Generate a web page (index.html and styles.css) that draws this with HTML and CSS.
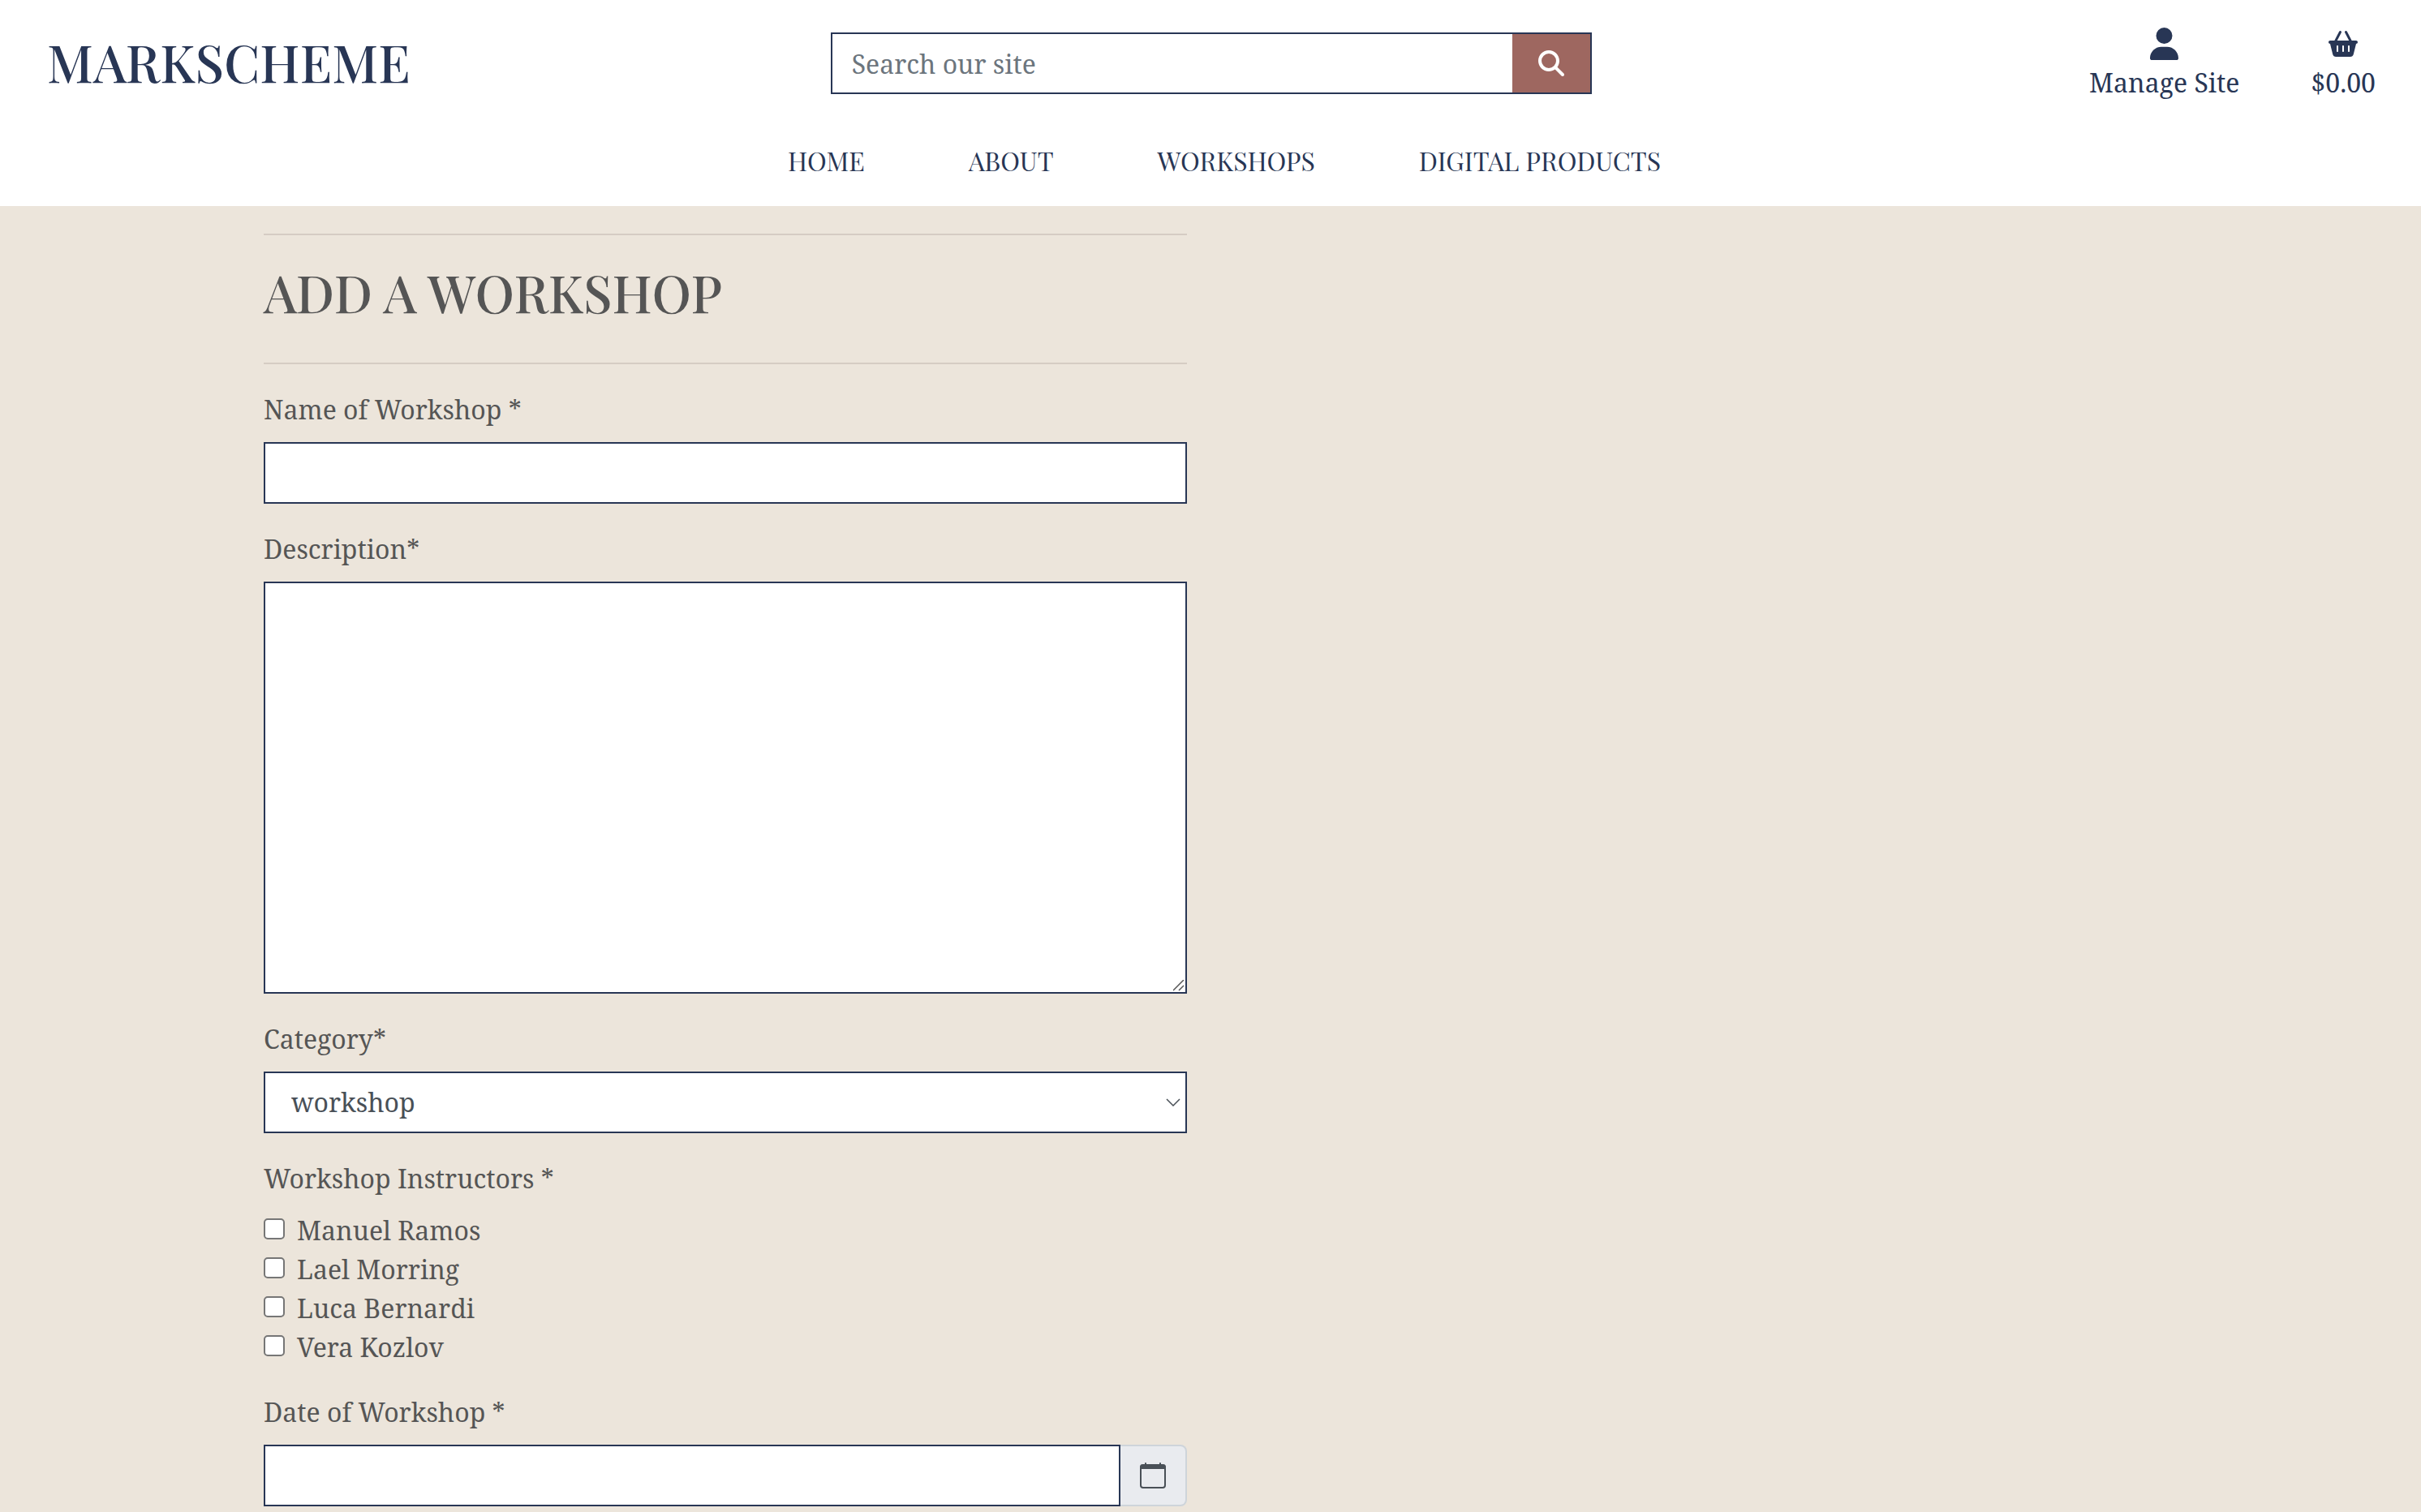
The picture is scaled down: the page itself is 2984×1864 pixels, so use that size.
FILE: index.html
```html
<!DOCTYPE html>
<html lang="en">
<head>
  <meta charset="utf-8">
  <meta name="viewport" content="width=device-width, initial-scale=1">
  <title>Markscheme</title>
  <link rel="stylesheet" href="styles.css">
</head>
<body>
  <header class="site-header">
    <div class="topbar">
      <a class="logo" href="#">MARKSCHEME</a>
      <form class="search" role="search">
        <input class="search-input" type="text" placeholder="Search our site" aria-label="Search our site">
        <button class="search-button" type="submit" aria-label="Search">
          <svg width="32" height="32" viewBox="0 0 512 512" fill="currentColor" aria-hidden="true"><path d="M416 208c0 45.900-14.900 88.300-40 122.700L502.600 457.400c12.500 12.500 12.500 32.800 0 45.300s-32.800 12.500-45.300 0L330.700 376c-34.400 25.200-76.800 40-122.700 40C93.100 416 0 322.900 0 208S93.100 0 208 0S416 93.100 416 208zM208 352a144 144 0 1 0 0-288 144 144 0 1 0 0 288z"/></svg>
        </button>
      </form>
      <div class="account">
        <a class="account-link" href="#">
          <svg class="account-icon" width="35" height="40" viewBox="0 0 448 512" fill="currentColor" aria-hidden="true"><path d="M224 256A128 128 0 1 0 224 0a128 128 0 1 0 0 256zm-45.700 48C79.800 304 0 383.800 0 482.300C0 498.700 13.300 512 29.700 512l388.600 0c16.400 0 29.700-13.300 29.700-29.700C448 383.800 368.200 304 269.700 304l-91.400 0z"/></svg>
          <span>Manage Site</span>
        </a>
        <a class="account-link" href="#">
          <svg class="account-icon" width="36" height="40" viewBox="0 -64 576 640" fill="currentColor" aria-hidden="true"><path d="M253.300 35.100c6.100-11.800 1.500-26.300-10.200-32.400s-26.300-1.500-32.400 10.200L117.600 192 32 192c-17.700 0-32 14.300-32 32s14.300 32 32 32L83.900 463.500C91 492 116.600 512 146 512L430 512c29.400 0 55-20 62.100-48.500L544 256c17.700 0 32-14.300 32-32s-14.300-32-32-32l-85.600 0L365.300 12.900C359.200 1.200 344.700-3.400 332.900 2.700s-16.300 20.600-10.200 32.400L404.300 192l-232.600 0L253.300 35.100zM192 304l0 96c0 8.800-7.200 16-16 16s-16-7.200-16-16l0-96c0-8.800 7.200-16 16-16s16 7.200 16 16zm96-16c8.800 0 16 7.200 16 16l0 96c0 8.800-7.200 16-16 16s-16-7.200-16-16l0-96c0-8.800 7.200-16 16-16zm128 16l0 96c0 8.800-7.200 16-16 16s-16-7.200-16-16l0-96c0-8.800 7.200-16 16-16s16 7.200 16 16z"/></svg>
          <span>$0.00</span>
        </a>
      </div>
    </div>
    <nav class="main-nav" aria-label="Main">
      <a href="#">HOME</a>
      <a href="#">ABOUT</a>
      <a href="#">WORKSHOPS</a>
      <a href="#">DIGITAL PRODUCTS</a>
    </nav>
  </header>

  <main class="content">
    <div class="column">
      <hr class="rule">
      <h1 class="title">ADD A WORKSHOP</h1>
      <hr class="rule">
      <form class="workshop-form">
        <div class="field">
          <label for="name">Name of Workshop *</label>
          <input class="control" id="name" type="text">
        </div>
        <div class="field">
          <label for="description">Description*</label>
          <textarea class="control control-area" id="description"></textarea>
        </div>
        <div class="field">
          <label for="category">Category*</label>
          <select class="control control-select" id="category">
            <option>workshop</option>
          </select>
        </div>
        <fieldset class="field">
          <legend>Workshop Instructors *</legend>
          <div class="checks">
            <label class="check"><input type="checkbox"> Manuel Ramos</label>
            <label class="check"><input type="checkbox"> Lael Morring</label>
            <label class="check"><input type="checkbox"> Luca Bernardi</label>
            <label class="check"><input type="checkbox"> Vera Kozlov</label>
          </div>
        </fieldset>
        <div class="field">
          <label for="date">Date of Workshop *</label>
          <div class="date-group">
            <input class="control" id="date" type="text">
            <button class="date-button" type="button" aria-label="Choose a date">
              <svg width="32" height="32" viewBox="0 0 16 16" fill="currentColor" aria-hidden="true"><path fill-rule="evenodd" d="M14 1H2a1 1 0 0 0-1 1v12a1 1 0 0 0 1 1h12a1 1 0 0 0 1-1V2a1 1 0 0 0-1-1zM2 1a2 2 0 0 0-2 2v11a2 2 0 0 0 2 2h12a2 2 0 0 0 2-2V3a2 2 0 0 0-2-2H2z"/><path d="M3 .5a.5.5 0 0 1 1 0V1h8V.5a.5.5 0 0 1 1 0V1h1a2 2 0 0 1 2 2v1H0V3a2 2 0 0 1 2-2h1z"/></svg>
            </button>
          </div>
        </div>
      </form>
    </div>
  </main>
</body>
</html>
```
FILE: styles.css
```css
:root {
  --navy: #283655;
  --sand: #ece5db;
  --text: #555;
  --slate: #495057;
  --display: "Playfair Display", "Liberation Serif", serif;
  --body: "Noto Serif", "DejaVu Serif Condensed", "DejaVu Serif", serif;
}

* {
  box-sizing: border-box;
}

body {
  margin: 0;
  background: var(--sand);
  color: var(--text);
  font-family: var(--body);
  font-size: 32px;
  line-height: 48px;
}

a {
  color: var(--navy);
  text-decoration: none;
}

input,
textarea,
select,
button {
  margin: 0;
  font: inherit;
}

/* Header */
.site-header {
  background: #fff;
  color: var(--navy);
}

.topbar {
  display: grid;
  grid-template-columns: 1fr 1fr 1fr;
  align-items: center;
  height: 156px;
}

.logo {
  padding: 0 0 4px 58px;
  font-family: var(--display);
  font-size: 64px;
  font-weight: 500;
  line-height: 76px;
}

.search {
  display: flex;
  height: 76px;
  margin: 0 27px 0 29px;
  border: 2px solid var(--navy);
}

.search-input {
  flex: 1;
  min-width: 0;
  padding: 2px 24px 0;
  border: 0;
  background: #fff;
}

.search-input::placeholder {
  color: #6c757d;
  opacity: 1;
}

.search-button {
  display: grid;
  place-items: center;
  width: 96px;
  padding: 0;
  border: 0;
  background: #9e6760;
  color: #fff;
}

.account {
  display: flex;
  justify-content: flex-end;
  gap: 88px;
  padding: 4px 56px 0 0;
}

.account-link {
  display: flex;
  flex-direction: column;
  align-items: center;
  gap: 4px;
}

.main-nav {
  display: flex;
  justify-content: center;
  gap: 128px;
  padding: 18px 0 32px 34px;
  font-family: var(--display);
}

/* Form */
.content {
  display: grid;
  grid-template-columns: 1fr 1fr;
  gap: 58px;
  padding: 34px 325px 0;
}

.rule {
  margin: 0;
  border: 0;
  border-top: 2px solid #d5ccc3;
}

.title {
  margin: 31px 0 49px;
  font-family: var(--display);
  font-size: 64px;
  font-weight: 500;
  line-height: 77px;
}

.workshop-form {
  display: grid;
  gap: 32px;
  padding-top: 32px;
}

.field {
  display: grid;
  gap: 16px;
  min-width: 0;
  margin: 0;
  padding: 0;
  border: 0;
}

legend {
  padding: 0 0 16px;
}

.control {
  display: block;
  width: 100%;
  min-width: 0;
  height: 76px;
  padding: 12px 24px;
  border: 2px solid var(--navy);
  border-radius: 0;
  background: #fff;
  color: var(--slate);
}

.control-area {
  height: 508px;
  resize: vertical;
}

.control-area::-webkit-resizer {
  background: url("data:image/svg+xml,%3Csvg xmlns='http://www.w3.org/2000/svg' viewBox='0 0 15 15'%3E%3Cpath d='M0 13 13 0M7 13l6-6' stroke='%23555' stroke-width='1.5'/%3E%3C/svg%3E") center / 100% no-repeat;
}

.control-select {
  padding: 0 32px;
  appearance: none;
  background: #fff url("data:image/svg+xml,%3Csvg xmlns='http://www.w3.org/2000/svg' width='18' height='10' viewBox='0 0 18 10'%3E%3Cpath d='M1 1l8 8 8-8' fill='none' stroke='%23495057' stroke-width='1.5'/%3E%3C/svg%3E") right 6px center no-repeat;
}

.check {
  display: flex;
  gap: 15px;
}

.check input {
  flex: none;
  width: 26px;
  height: 26px;
  margin-top: 9px;
  border: 2px solid #767676;
  border-radius: 5px;
  background: #fff;
  appearance: none;
}

.check input:checked {
  background: var(--navy);
}

.date-group {
  display: flex;
}

.date-button {
  display: grid;
  flex: none;
  place-items: center;
  width: 82px;
  padding: 0;
  border: 2px solid #ced4da;
  border-left: 0;
  border-radius: 0 8px 8px 0;
  background: #e9ebef;
  color: var(--slate);
}
```
